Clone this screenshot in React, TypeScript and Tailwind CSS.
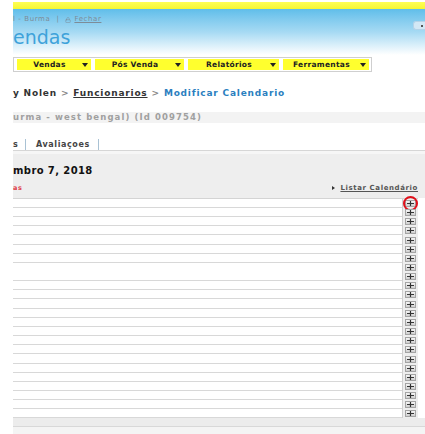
import React from 'react';
import { Lock } from 'lucide-react';

const rowHeights = ['h-[9px]', 'h-[9px]', 'h-[9px]', 'h-[9px]', 'h-[10px]', 'h-[9px]', 'h-[9px]', 'h-[18px]', 'h-[9px]', 'h-[9px]', 'h-[10px]', 'h-[9px]', 'h-[9px]', 'h-[9px]', 'h-[9px]', 'h-[9px]', 'h-[10px]', 'h-[9px]', 'h-[9px]', 'h-[9px]', 'h-[9px]', 'h-[9px]', 'h-[9px]'];

const menu = [
    { label: 'Vendas', w: 'w-[74px]' },
    { label: 'Pós Venda', w: 'w-[89px]' },
    { label: 'Relatórios', w: 'w-[91px]' },
    { label: 'Ferramentas', w: 'w-[86px]' },
];

const PlusButton = ({ marked = false }: { marked?: boolean }) => (
    <div className="relative w-[11px] h-[7px] border border-[#a4a4a4] bg-gradient-to-b from-[#f6f6f6] to-[#cfcfcf] flex items-center justify-center">
        <svg width="7" height="5" viewBox="0 0 7 5">
            <path d="M0 2.5h7M3.5 0v5" stroke="#333" strokeWidth="1.2" />
        </svg>
        {marked && <div className="absolute -left-[3px] -top-[5px] w-[15px] h-[15px] rounded-full border-2 border-[#e0101a]" />}
    </div>
);

export default function App() {
    return (
        <div className="w-[425px] h-[434px] overflow-hidden bg-white pl-[13px] font-['DejaVu_Sans',sans-serif]">
            {/* header */}
            <div className="mt-[2px] h-[7px] bg-gradient-to-b from-[#ffff55] to-[#f6f630]" />
            <div className="h-[46px] bg-gradient-to-b from-[#5fbeea] via-[#a6daf3] to-white flex justify-between">
                <div className="flex flex-col">
                    <div className="pt-[4px] h-[17px] flex items-center gap-[3px] text-[7px] tracking-[0.6px] text-[#7d8c99] whitespace-nowrap">
                        <span>l - Burma</span>
                        <span className="px-[3px]">|</span>
                        <Lock size={6} strokeWidth={2} />
                        <span className="underline">Fechar</span>
                    </div>
                    <div className="text-[19px] leading-[22px] text-[#3ea2da]">endas</div>
                </div>
                <div className="mt-[12px] w-[12px] h-[9px] rounded-l-[3px] bg-[#d3e8f5] border border-[#b5d3e8] border-r-0 flex items-center pl-[7px]">
                    <div className="w-[2px] h-[2px] bg-[#555]" />
                </div>
            </div>
            <div className="h-[2px]" />
            <div className="w-[359px] h-[15px] border border-[#cfcfcf] flex items-center gap-[4px] pl-[3px]">
                {menu.map((m) => (
                    <div key={m.label} className={`${m.w} h-[11px] bg-[#ffff2e] flex items-center pr-[3px] text-[7.5px] tracking-[0.3px] font-bold text-[#222]`}>
                        <span className="flex-1 text-center">{m.label}</span>
                        <span className="w-0 h-0 border-l-[3px] border-r-[3px] border-t-[4px] border-l-transparent border-r-transparent border-t-[#222]" />
                    </div>
                ))}
            </div>

            {/* breadcrumb */}
            <div className="mt-[16px] h-[11px] flex items-center text-[9px] tracking-[0.8px] font-bold whitespace-nowrap">
                <span className="text-[#333]">y Nolen</span>
                <span className="text-[#888] px-[4px]">&gt;</span>
                <span className="text-[#333] underline">Funcionarios</span>
                <span className="text-[#888] px-[4px]">&gt;</span>
                <span className="text-[#2b7fc0]">Modificar Calendario</span>
            </div>

            <div className="mt-[13px] h-[11px] bg-[#f3f3f3] flex items-center text-[8.5px] tracking-[1.1px] font-bold text-[#a0a0a0] whitespace-nowrap">
                urma - west bengal) (Id 009754)
            </div>

            {/* tabs */}
            <div className="mt-[16px] h-[12px] border-b border-[#d6d6d6] flex items-stretch text-[8px] tracking-[0.6px] font-bold text-[#444]">
                <div className="w-[13px] border-r border-[#a9c2d4] flex items-center">s</div>
                <div className="w-[73px] border-r border-[#a9c2d4] flex items-center pl-[10px]">Avaliaçoes</div>
            </div>

            {/* panel */}
            <div className="h-[47px] bg-[#eeeeee] border-t-[3px] border-[#f6f6f6] flex flex-col pr-[7px]">
                <div className="mt-[9px] text-[10px] font-bold tracking-[0.4px] text-[#111]">mbro 7, 2018</div>
                <div className="mt-[5px] flex justify-between items-end">
                    <span className="text-[6.5px] font-bold tracking-[0.5px] text-[#e0404a]">as</span>
                    <span className="flex items-center gap-[5px] text-[7px] tracking-[0.6px] font-bold text-[#555]">
                        <span className="w-0 h-0 border-t-[2px] border-b-[2px] border-l-[3px] border-t-transparent border-b-transparent border-l-[#333]" />
                        <span className="underline">Listar Calendário</span>
                    </span>
                </div>
            </div>

            {/* rows */}
            <div className="w-[405px] border-t border-[#d4d4d4]">
                {rowHeights.map((h, i) => (
                    <div key={i} className={`${h} flex`}>
                        <div className="flex-1 border-b border-[#d8d8d8] bg-white" />
                        <div className="w-[16px] bg-[#eeeeee] border-l border-[#cfcfcf] flex flex-col items-center justify-around">
                            <PlusButton marked={i === 0} />
                            {h === 'h-[18px]' && <PlusButton />}
                        </div>
                    </div>
                ))}
            </div>
            <div className="h-[8px] bg-[#ececec]" />
            <div className="h-[1px] bg-[#d8d8d8]" />
            <div className="h-[20px] bg-[#f4f4f4]" />
        </div>
    );
}
